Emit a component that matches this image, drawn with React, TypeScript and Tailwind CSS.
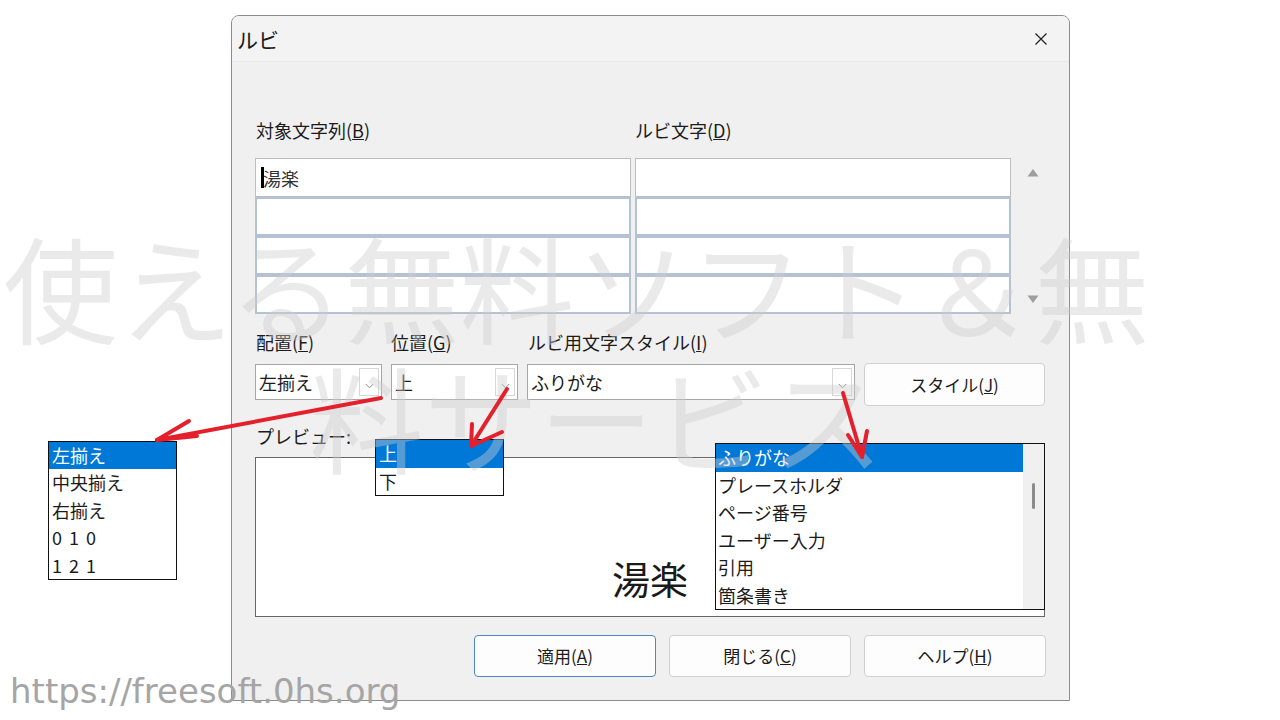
import React from 'react';

const Chevron = () => (
  <svg width="9" height="6" viewBox="0 0 9 6">
    <path d="M0.8 1 L4.5 4.8 L8.2 1" fill="none" stroke="#8a8a8a" strokeWidth="1" />
  </svg>
);

function Combo({ w, text }: { w: string; text: string }) {
  return (
    <div className={`flex h-[36px] ${w} bg-white border border-[#a6a6a6]`}>
      <div className="flex-1 pl-[3px] text-[18px] leading-[34px] text-[#1b1b1b]">{text}</div>
      <div className="w-[20px] my-[3px] mr-[2px] border border-[#d6d6d6] flex items-center justify-center pt-[7px]">
        <Chevron />
      </div>
    </div>
  );
}

function Cell({ first, children }: { first?: boolean; children?: React.ReactNode }) {
  return first ? (
    <div className="h-[39px] bg-white border border-[#bdbdbd] flex items-center pl-[5px]">{children}</div>
  ) : (
    <div className="h-[39px] bg-white border-2 border-[#b4c2d4]" />
  );
}

function Btn({ label, u, focused, w }: { label: string; u: string; focused?: boolean; w: string }) {
  return (
    <div
      className={`${w} h-[42px] rounded-[4px] bg-[#fdfdfd] flex items-center justify-center text-[17px] text-[#1b1b1b] ${
        focused ? 'border-[1.5px] border-[#4d87c4]' : 'border border-[#d0d0d0]'
      }`}
    >
      <span>
        {label}(<u>{u}</u>)
      </span>
    </div>
  );
}

export default function App() {
  return (
    <div className="relative w-[1280px] h-[720px] bg-white overflow-hidden font-['Noto_Sans_CJK_JP','Noto_Sans',sans-serif]">
      <div className="pt-[15px] pl-[231px]">
        <div className="w-[839px] h-[686px] bg-[#f0f0f0] border border-[#8c8c8c] rounded-t-[8px] flex flex-col overflow-hidden">
          {/* title bar */}
          <div className="h-[46px] bg-[#f3f3f3] flex items-center justify-between pl-[5px] pr-[21px] border-b border-[#e9e9e9]">
            <span className="text-[21px] leading-[24px] text-[#1a1a1a]">ルビ</span>
            <svg width="14" height="14" viewBox="0 0 14 14">
              <path d="M1.5 1.5 L12.5 12.5 M12.5 1.5 L1.5 12.5" stroke="#1f1f1f" strokeWidth="1.2" fill="none" />
            </svg>
          </div>

          <div className="pl-[23px] pr-[23px] text-[#1b1b1b]">
            {/* labels row 1 */}
            <div className="mt-[56px] grid grid-cols-[376px_376px] gap-x-[4px] h-[24px] text-[18px] leading-[24px]">
              <div className="pl-[1px]">
                対象文字列(<u>B</u>)
              </div>
              <div>
                ルビ文字(<u>D</u>)
              </div>
            </div>

            {/* table */}
            <div className="mt-[16px] flex">
              <div className="grid grid-cols-[376px_376px] gap-x-[4px]">
                <div className="flex flex-col">
                  <Cell first>
                    <span className="inline-block w-[3px] h-[21px] bg-black -mr-[1px]" />
                    <span className="text-[18px] leading-[24px] text-[#333]">湯楽</span>
                  </Cell>
                  <Cell />
                  <Cell />
                  <Cell />
                </div>
                <div className="flex flex-col">
                  <Cell first />
                  <Cell />
                  <Cell />
                  <Cell />
                </div>
              </div>
              <div className="ml-[16px] w-[12px] flex flex-col justify-between pt-[10px] pb-[10px]">
                <svg width="12" height="9" viewBox="0 0 12 9">
                  <path d="M6 1 L11.5 8.5 L0.5 8.5 Z" fill="#9e9e9e" />
                </svg>
                <svg width="12" height="9" viewBox="0 0 12 9">
                  <path d="M0.5 0.5 L11.5 0.5 L6 8 Z" fill="#9e9e9e" />
                </svg>
              </div>
            </div>

            {/* combos row */}
            <div className="mt-[16px] flex gap-[9px] h-[76px]">
              <div className="flex flex-col">
                <div className="h-[24px] text-[18px] leading-[24px] pl-[1px]">
                  配置(<u>F</u>)
                </div>
                <div className="mt-[10px]">
                  <Combo w="w-[127px]" text="左揃え" />
                </div>
              </div>
              <div className="flex flex-col">
                <div className="h-[24px] text-[18px] leading-[24px]">
                  位置(<u>G</u>)
                </div>
                <div className="mt-[10px]">
                  <Combo w="w-[127px]" text="上" />
                </div>
              </div>
              <div className="flex flex-col">
                <div className="h-[24px] text-[18px] leading-[24px] pl-[1px]">
                  ルビ用文字スタイル(<u>I</u>)
                </div>
                <div className="mt-[10px]">
                  <Combo w="w-[328px]" text="ふりがな" />
                </div>
              </div>
              <div className="pt-[33px]">
                <div className="w-[181px] h-[43px] rounded-[4px] bg-[#fdfdfd] border border-[#d0d0d0] flex items-center justify-center text-[17px]">
                  <span>
                    スタイル(<u>J</u>)
                  </span>
                </div>
              </div>
            </div>

            {/* preview */}
            <div className="mt-[18px] h-[24px] text-[18px] leading-[24px] pl-[1px]">プレビュー:</div>
            <div className="mt-[9px] mr-[1px] h-[160px] bg-white border-[1.5px] border-[#666] flex items-end justify-center pb-[18px]">
              <span className="text-[38px] leading-[40px] text-[#1a1a1a]">湯楽</span>
            </div>

            {/* buttons */}
            <div className="mt-[18px] flex justify-end gap-[13px]">
              <Btn w="w-[182px]" label="適用" u="A" focused />
              <Btn w="w-[182px]" label="閉じる" u="C" />
              <Btn w="w-[182px]" label="ヘルプ" u="H" />
            </div>
          </div>
        </div>
      </div>

      {/* dropdown 1 */}
      <div className="absolute left-[48px] top-[441px] w-[129px] border border-[#111] bg-white text-[18px] leading-[27.4px] text-[#1b1b1b]">
        <div className="bg-[#0078d7] text-white pl-[3px]">左揃え</div>
        <div className="pl-[3px]">中央揃え</div>
        <div className="pl-[3px]">右揃え</div>
        <div className="pl-[3px] tracking-[1.5px]">0 1 0</div>
        <div className="pl-[3px] tracking-[1.5px]">1 2 1</div>
      </div>

      {/* dropdown 2 */}
      <div className="absolute left-[375px] top-[439px] w-[129px] border border-[#111] bg-white text-[18px] leading-[27.5px] text-[#1b1b1b]">
        <div className="bg-[#0078d7] text-white pl-[3px]">上</div>
        <div className="pl-[3px]">下</div>
      </div>

      {/* dropdown 3 */}
      <div className="absolute left-[715px] top-[443px] w-[330px] h-[167px] border border-[#111] bg-white flex text-[18px] leading-[27.5px] text-[#1b1b1b]">
        <div className="flex-1">
          <div className="bg-[#0078d7] text-white pl-[2px]">ふりがな</div>
          <div className="pl-[2px]">プレースホルダ</div>
          <div className="pl-[2px]">ページ番号</div>
          <div className="pl-[2px]">ユーザー入力</div>
          <div className="pl-[2px]">引用</div>
          <div className="pl-[2px]">箇条書き</div>
        </div>
        <div className="w-[21px] bg-[#f0f0f0] flex justify-center pt-[39px]">
          <div className="w-[3px] h-[26px] bg-[#8c8c8c] rounded-full" />
        </div>
      </div>

      {/* watermark */}
      <div className="absolute left-[3px] top-[220px] pointer-events-none text-[115px] leading-[130px] text-[rgba(205,205,205,0.42)] whitespace-nowrap">
        <div>使える無料ソフト＆無</div>
        <div className="pl-[306px]">料サービス</div>
      </div>

      {/* arrows */}
      <svg className="absolute left-0 top-0 pointer-events-none" width="1280" height="720" viewBox="0 0 1280 720">
        <g stroke="#e3202b" strokeWidth="4" strokeLinecap="round" strokeLinejoin="round" fill="none">
          <path d="M381 398 L157 440" />
          <path d="M189 421 L157 440 L197 436" />
          <path d="M507 389 L471 446" />
          <path d="M472 424 L471 446 L502 432" />
          <path d="M843 393 L862 457" />
          <path d="M848 435 L862 457 L867 431" />
        </g>
      </svg>

      {/* url */}
      <div className="absolute left-[10px] top-[674px] font-['DejaVu_Sans',sans-serif] text-[34px] leading-[34px] text-[#a5a5a5] whitespace-nowrap">
        https://freesoft.0hs.org
      </div>
    </div>
  );
}
